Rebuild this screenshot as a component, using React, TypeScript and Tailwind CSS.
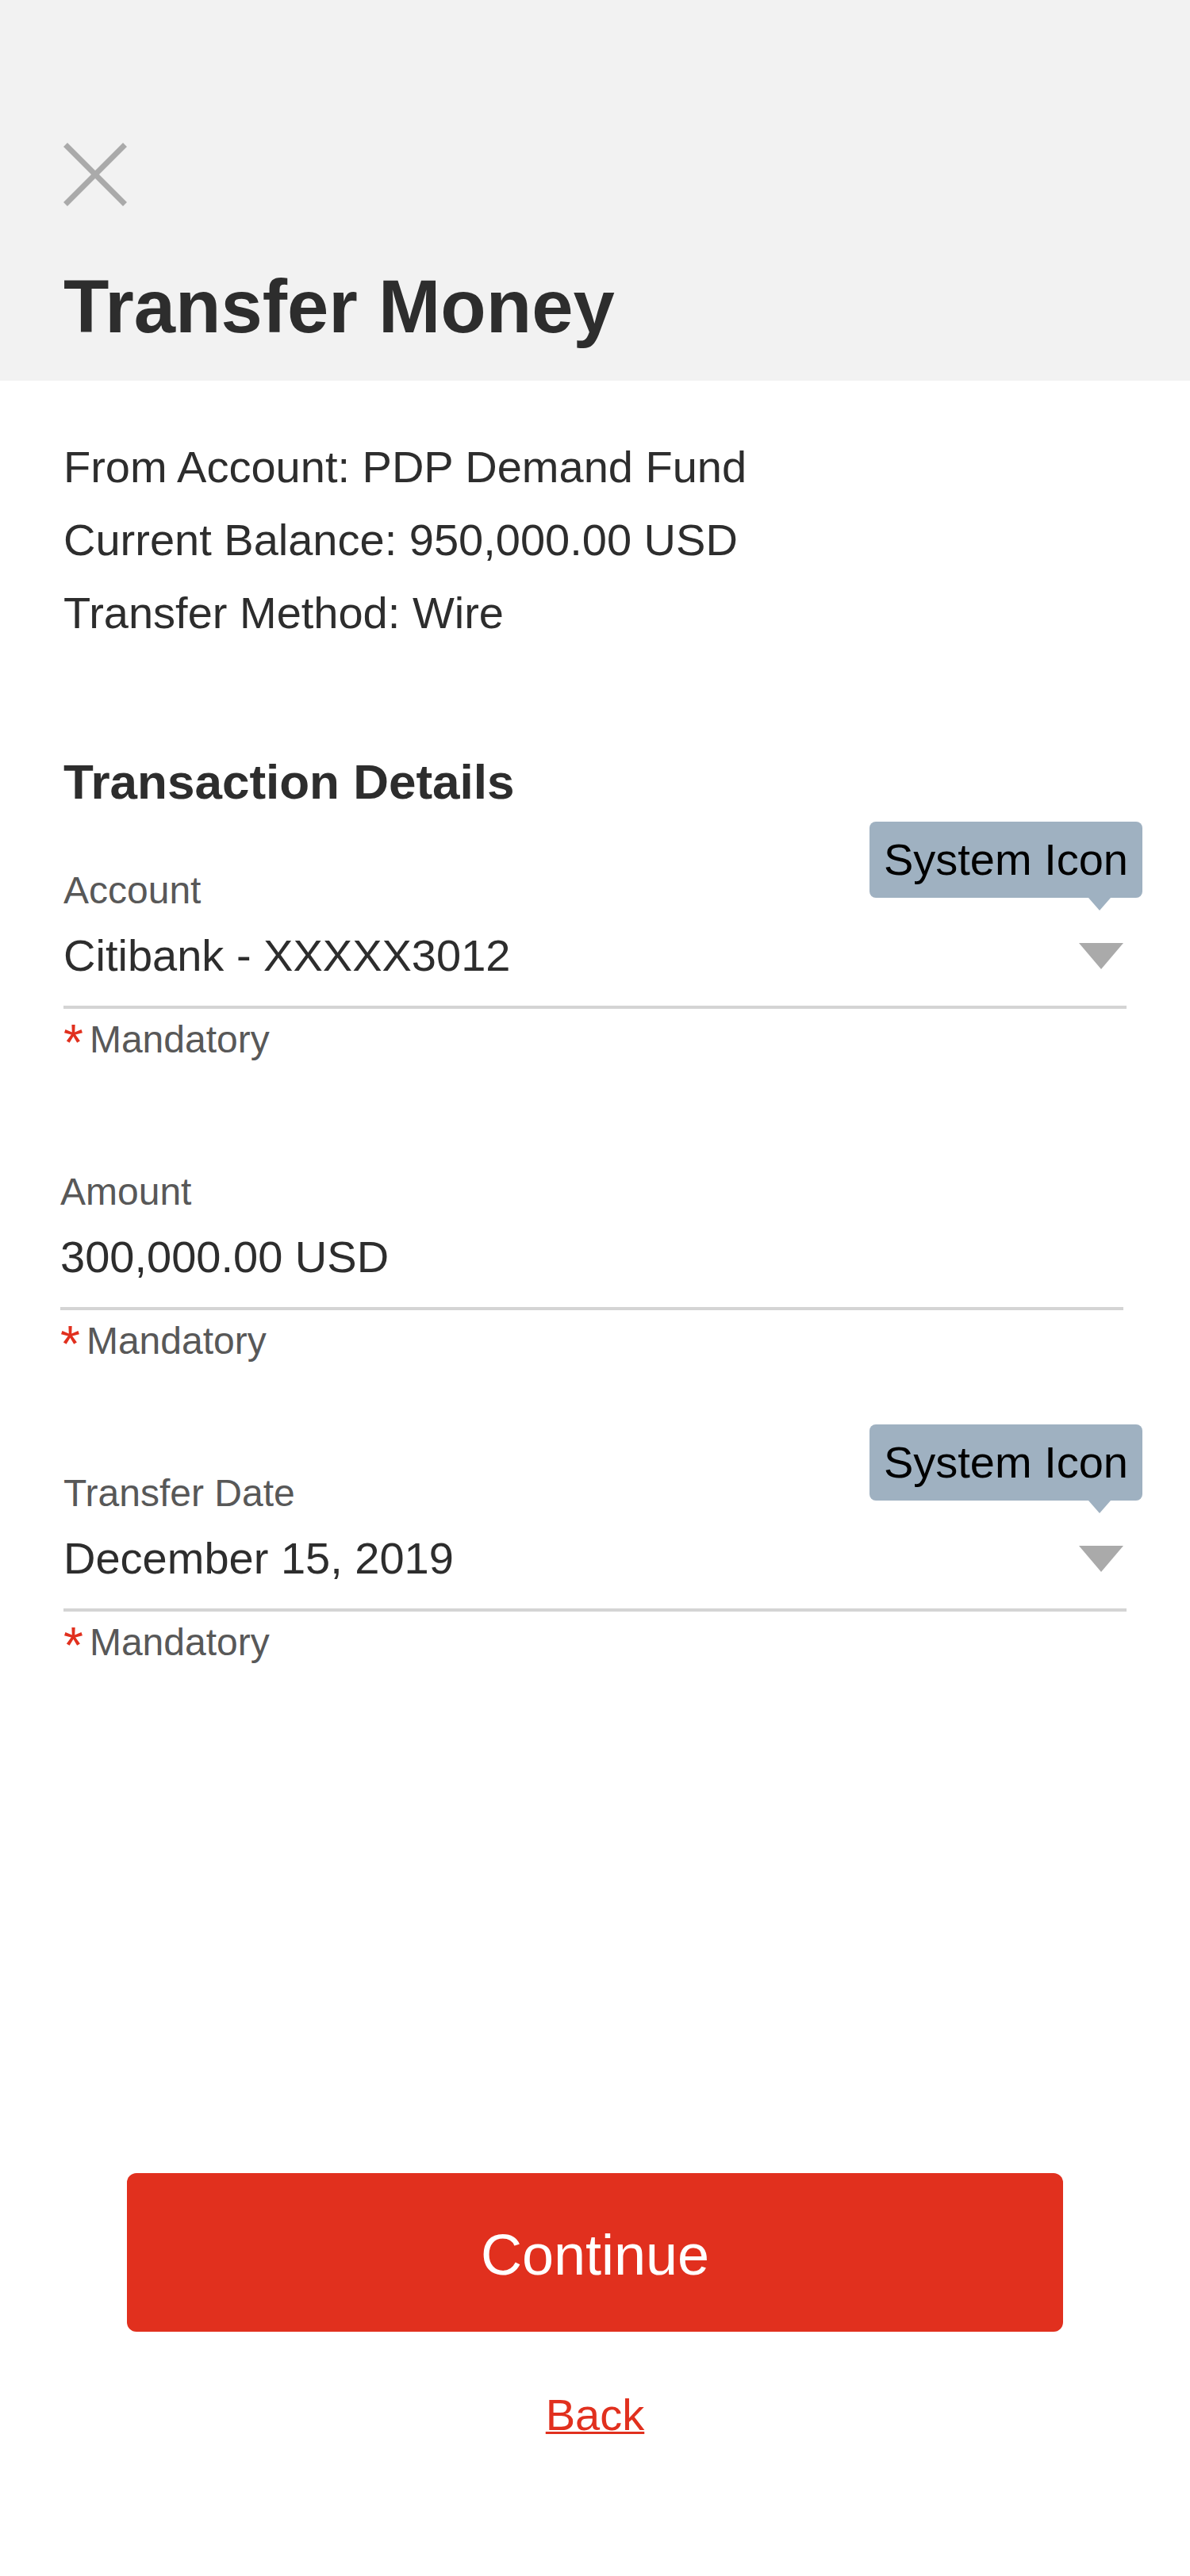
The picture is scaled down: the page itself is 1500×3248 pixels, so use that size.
import { useState, type ReactNode } from "react";

function Tooltip({ id, children }: { id: string; children: ReactNode }) {
  return (
    <div
      id={id}
      role="tooltip"
      className="absolute -top-[57px] -right-5 flex h-24 items-center rounded-lg bg-[#9fb1c1] px-[18px] text-[56px] leading-[96px] whitespace-nowrap text-black"
    >
      {children}
      <svg
        className="absolute top-full right-10 h-4 w-7"
        viewBox="0 0 28 16"
        aria-hidden="true"
      >
        <path d="M0 0H28L14 16Z" fill="#9fb1c1" />
      </svg>
    </div>
  );
}

function Mandatory() {
  return (
    <p className="mt-[9px] flex h-[60px] gap-2 text-5xl leading-[60px] text-[#585858]">
      <span className="text-[64px] leading-[68px] text-[#e1301e]">*</span>
      Mandatory
    </p>
  );
}

function SelectField({ id, label, options }: { id: string; label: string; options: string[] }) {
  return (
    <div className="relative mx-20">
      <label htmlFor={id} className="block text-5xl leading-[60px] text-[#585858]">
        {label}
      </label>
      <div className="relative mt-4 border-b-4 border-[#d4d4d4] pb-[27px]">
        <select
          id={id}
          aria-describedby={`${id}-tip`}
          className="block h-[72px] w-full appearance-none bg-transparent text-[56px] leading-[72px] outline-none"
        >
          {options.map((o) => (
            <option key={o}>{o}</option>
          ))}
        </select>
        <svg
          className="pointer-events-none absolute top-5 right-1 h-[33px] w-14"
          viewBox="0 0 56 33"
          aria-hidden="true"
        >
          <path d="M0 0H56L28 33Z" fill="#aaaaaa" />
        </svg>
      </div>
      <Mandatory />
      <Tooltip id={`${id}-tip`}>System Icon</Tooltip>
    </div>
  );
}

function TextField({ id, label, initial }: { id: string; label: string; initial: string }) {
  const [value, setValue] = useState(initial);
  return (
    <div className="mr-[84px] ml-[76px]">
      <label htmlFor={id} className="block text-5xl leading-[60px] text-[#585858]">
        {label}
      </label>
      <div className="mt-4 border-b-4 border-[#d4d4d4] pb-[27px]">
        <input
          id={id}
          type="text"
          value={value}
          onChange={(e) => setValue(e.target.value)}
          className="block h-[72px] w-full bg-transparent text-[56px] leading-[72px] outline-none"
        />
      </div>
      <Mandatory />
    </div>
  );
}

export default function App() {
  return (
    <div className="flex min-h-screen flex-col bg-white font-['Liberation_Sans',Arial,sans-serif] text-[#2d2d2d]">
      <header className="bg-[#f2f2f2] px-20 pt-[180px] pb-[33px]">
        <button type="button" aria-label="Close" className="block size-20">
          <svg className="size-20" viewBox="0 0 80 80" aria-hidden="true">
            <path d="M2.5 2.5L77.5 77.5M77.5 2.5L2.5 77.5" stroke="#aaaaaa" strokeWidth="7" />
          </svg>
        </button>
        <h1 className="mt-[67px] text-[94px] leading-[120px] font-bold">
          Transfer Money
        </h1>
      </header>

      <main className="flex flex-1 flex-col pt-[63px]">
        <div className="px-20 text-[56px] leading-[92px]">
          <p>From Account: PDP Demand Fund</p>
          <p>Current Balance: 950,000.00 USD</p>
          <p>Transfer Method: Wire</p>
        </div>

        <form className="flex flex-1 flex-col" onSubmit={(e) => e.preventDefault()}>
          <h2 className="mt-[127px] px-20 text-[62px] leading-20 font-bold">
            Transaction Details
          </h2>
          <div className="mt-[67px] flex flex-col gap-[132px]">
            <SelectField id="account" label="Account" options={["Citibank - XXXXX3012"]} />
            <TextField id="amount" label="Amount" initial="300,000.00 USD" />
            <SelectField id="date" label="Transfer Date" options={["December 15, 2019"]} />
          </div>

          <div className="mt-auto flex flex-col items-center px-40 pt-20 pb-[167px]">
            <button
              type="submit"
              className="h-[200px] w-full rounded-xl bg-[#e1301e] pt-1.5 text-7xl text-white"
            >
              Continue
            </button>
            <a
              href="#back"
              className="mt-[69px] text-[56px] leading-[72px] text-[#e1301e] underline decoration-[3px] underline-offset-2"
            >
              Back
            </a>
          </div>
        </form>
      </main>
    </div>
  );
}
